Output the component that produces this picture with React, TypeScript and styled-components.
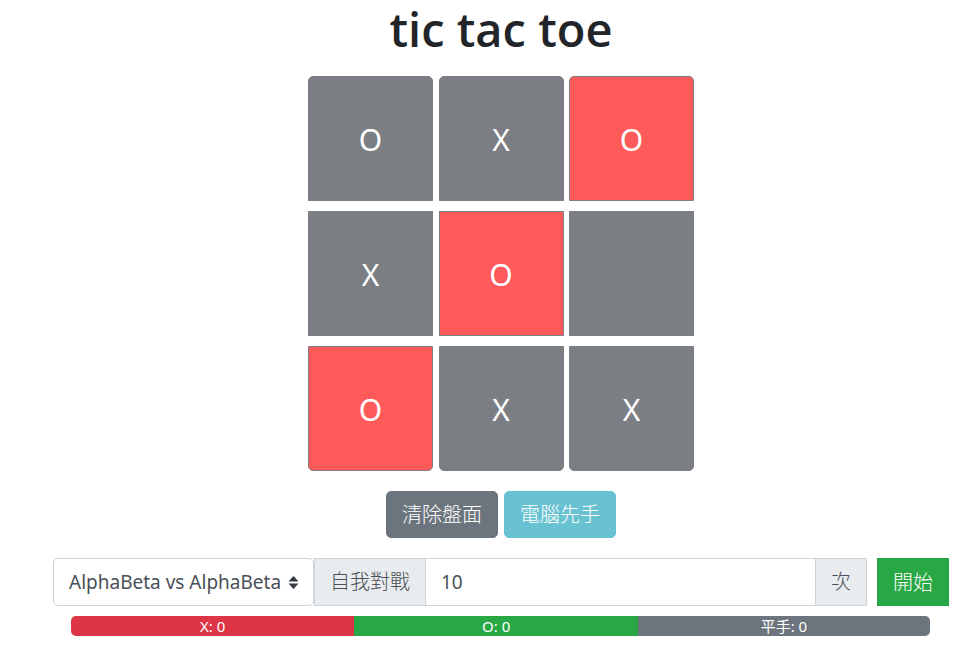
import React, { useState } from "react";
import styled, { createGlobalStyle } from "styled-components";

const GlobalStyle = createGlobalStyle`
  *, *::before, *::after { box-sizing: border-box; }
  body {
    margin: 0;
    background: #fff;
    color: #212529;
    font-family: "Noto Sans", "Noto Sans CJK TC", sans-serif;
    font-size: 20px;
    line-height: 30px;
  }
  button, input, select { font: inherit; margin: 0; }
`;

const Page = styled.main`
  display: flex;
  flex-direction: column;
  padding: 0 18px 0 53px;
`;

const Title = styled.h1`
  margin: 0 0 18px;
  font-family: "Open Sans", "Noto Sans", sans-serif;
  font-size: 47px;
  font-weight: 600;
  line-height: 58px;
  text-align: center;
`;

const Board = styled.div`
  display: grid;
  grid-template-columns: repeat(3, 125px);
  gap: 10px 5px;
  justify-content: space-between;
  width: 386px;
  margin: 0 auto 20px;
`;

type Edge = "top" | "middle" | "bottom";

const radii: Record<Edge, string> = {
  top: "5px 5px 0 0",
  middle: "0",
  bottom: "0 0 5px 5px",
};

const Cell = styled.button<{ $win: boolean; $edge: Edge }>`
  height: 125px;
  padding: 2px 0 0;
  border: 1px solid #7b7e82;
  border-radius: ${({ $edge }) => radii[$edge]};
  background: ${({ $win }) => ($win ? "#ff5a5a" : "#7b7e82")};
  color: #fff;
  font-size: 30px;
`;

const Actions = styled.div`
  display: flex;
  justify-content: center;
  gap: 6px;
  margin-bottom: 20px;
`;

const Button = styled.button<{ $color: string; $square?: boolean }>`
  padding: 8px 15px 7px;
  border: 1px solid ${({ $color }) => $color};
  border-radius: ${({ $square }) => ($square ? "0" : "5px")};
  background: ${({ $color }) => $color};
  color: #fff;
  font-weight: 300;
  white-space: nowrap;
`;

const ControlRow = styled.form`
  display: flex;
  height: 48px;
  margin-bottom: 10px;
`;

const SelectWrap = styled.div`
  position: relative;
  flex: 0 0 261px;
`;

const Select = styled.select`
  appearance: none;
  width: 100%;
  height: 100%;
  padding: 0 30px 0 15px;
  border: 1px solid #ced4da;
  border-radius: 5px;
  background: #fff;
  color: #495057;
  font-size: 19px;
`;

const SelectArrows = styled.svg`
  position: absolute;
  top: 18px;
  right: 15px;
  width: 11px;
  height: 13px;
  pointer-events: none;
`;

const Addon = styled.label`
  display: flex;
  align-items: center;
  padding: 0 15px;
  border: 1px solid #ced4da;
  background: #e9ecef;
  color: #495057;
  font-weight: 300;
  white-space: nowrap;
`;

const CountInput = styled.input`
  flex: 1;
  min-width: 0;
  padding: 0 15px;
  border: solid #ced4da;
  border-width: 1px 0;
  background: #fff;
  color: #495057;
  font-size: 19px;
`;

const StartSlot = styled.div`
  display: flex;
  margin-left: 10px;
`;

const Progress = styled.div`
  display: flex;
  height: 20px;
  margin: 0 19px 0 18px;
  overflow: hidden;
  border-radius: 5px;
  background: #e9ecef;
`;

const Segment = styled.div<{ $share: number; $color: string }>`
  width: ${({ $share }) => $share}%;
  background: ${({ $color }) => $color};
  color: #fff;
  font-size: 15px;
  line-height: 20px;
  text-align: center;
`;

const rows: { edge: Edge; cells: { mark: string; win: boolean }[] }[] = [
  { edge: "top", cells: [{ mark: "O", win: false }, { mark: "X", win: false }, { mark: "O", win: true }] },
  { edge: "middle", cells: [{ mark: "X", win: false }, { mark: "O", win: true }, { mark: "", win: false }] },
  { edge: "bottom", cells: [{ mark: "O", win: true }, { mark: "X", win: false }, { mark: "X", win: false }] },
];

const results = [
  { label: "X: 0", share: 33, color: "#dc3545" },
  { label: "O: 0", share: 33, color: "#28a745" },
  { label: "平手: 0", share: 34, color: "#6c757d" },
];

export default function App() {
  const [count, setCount] = useState("10");

  return (
    <>
      <GlobalStyle />
      <Page>
        <Title>tic tac toe</Title>
        <Board>
          {rows.map((row) =>
            row.cells.map((cell, column) => (
              <Cell
                key={`${row.edge}-${column}`}
                type="button"
                $win={cell.win}
                $edge={row.edge}
                aria-label={`${row.edge} ${column + 1} ${cell.mark}`}
              >
                {cell.mark}
              </Cell>
            ))
          )}
        </Board>
        <Actions>
          <Button type="button" $color="#6c757d">清除盤面</Button>
          <Button type="button" $color="#69c2d2">電腦先手</Button>
        </Actions>
        <ControlRow onSubmit={(event) => event.preventDefault()}>
          <SelectWrap>
            <Select aria-label="AlphaBeta vs AlphaBeta">
              <option>AlphaBeta vs AlphaBeta</option>
            </Select>
            <SelectArrows viewBox="0 0 11 13" aria-hidden="true">
              <path d="M5.5 0 10.5 5.5H.5zM.5 7.5h10L5.5 13z" fill="#343a40" />
            </SelectArrows>
          </SelectWrap>
          <Addon htmlFor="count">自我對戰</Addon>
          <CountInput
            id="count"
            type="text"
            inputMode="numeric"
            value={count}
            onChange={(event) => setCount(event.target.value)}
          />
          <Addon htmlFor="count">次</Addon>
          <StartSlot>
            <Button type="submit" $color="#28a745" $square>開始</Button>
          </StartSlot>
        </ControlRow>
        <Progress>
          {results.map((result) => (
            <Segment key={result.label} $share={result.share} $color={result.color}>
              {result.label}
            </Segment>
          ))}
        </Progress>
      </Page>
    </>
  );
}
